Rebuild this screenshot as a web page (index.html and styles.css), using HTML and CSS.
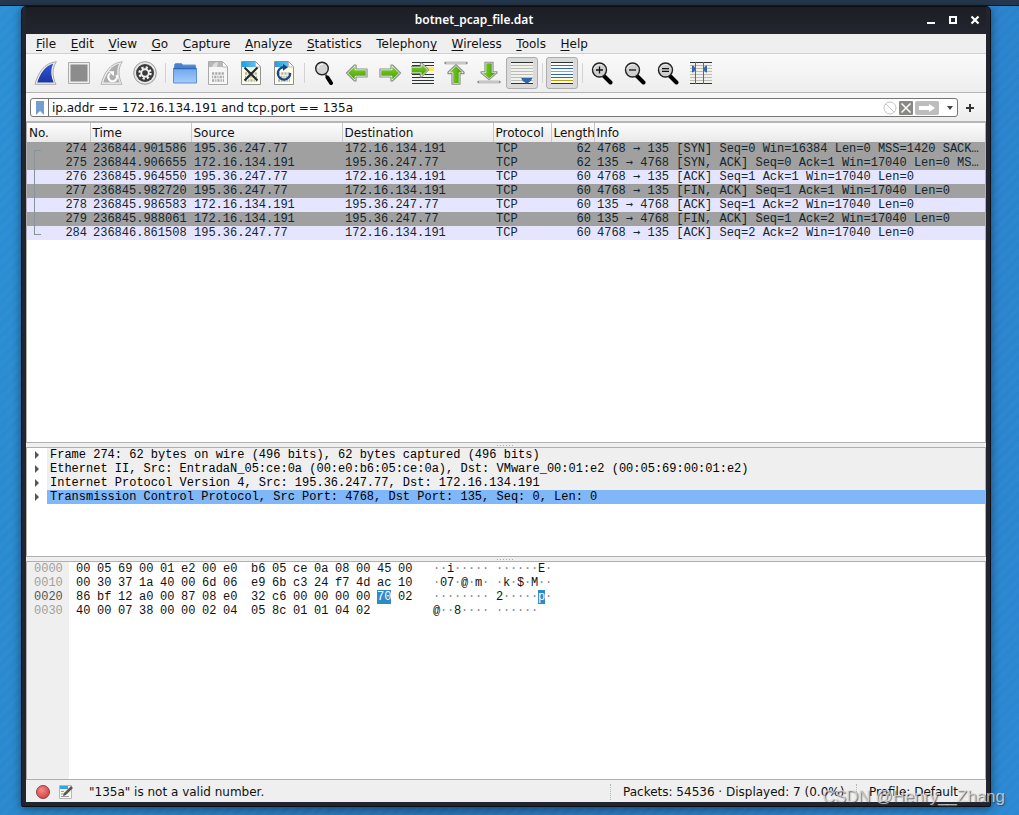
FILE: index.html
```html
<!DOCTYPE html>
<html lang="en">
<head>
<meta charset="utf-8">
<title>botnet_pcap_file.dat</title>
<link rel="stylesheet" href="styles.css">
</head>
<body>
<svg width="0" height="0" class="defs" aria-hidden="true">
  <defs>
    <linearGradient id="gBlue" x1="0" y1="0" x2="0" y2="1"><stop offset="0" stop-color="#3057d8"/><stop offset="1" stop-color="#1c35a0"/></linearGradient>
    <linearGradient id="gGreen" x1="0" y1="0" x2="0" y2="1"><stop offset="0" stop-color="#7fd42c"/><stop offset="1" stop-color="#459a06"/></linearGradient>
    <linearGradient id="gFolder" x1="0" y1="0" x2="0" y2="1"><stop offset="0" stop-color="#6ea6ec"/><stop offset="1" stop-color="#a6ccfb"/></linearGradient>
    <linearGradient id="gSky" x1="0" y1="0" x2="1" y2="0"><stop offset="0" stop-color="#1f9fe0"/><stop offset="1" stop-color="#5cc0ee"/></linearGradient>
    <radialGradient id="gRed" cx=".4" cy=".35" r=".7"><stop offset="0" stop-color="#f58a8a"/><stop offset="1" stop-color="#d63c40"/></radialGradient>
    <g id="arrow"><path d="M1.500 12 L9.500 4 H11 V8 H22 V16 H11 V20 H9.500 Z" fill="#fff" stroke="#8c8e8a" stroke-width="1.200" stroke-linejoin="round"/><path d="M3 12 L9.700 5.500 V9.200 H20.800 V14.800 H9.700 V18.500 Z" fill="url(#gGreen)"/></g>
    <g id="bits" fill="none" stroke-width="2.400"><path d="M6 12.500 h12" stroke-dasharray="2.200 1"/><path d="M6 16 h12" stroke-dasharray="1.200 1 2.200 1"/><path d="M6 19.500 h12" stroke-dasharray="2.200 1 1.200 1"/></g>
    <g id="lens"><path d="M14 15 L20.500 21.500" stroke="#000" stroke-width="4" stroke-linecap="round"/><circle cx="9.500" cy="9" r="7" fill="#cfcfcf" stroke="#222" stroke-width="1.400"/><path d="M4 8 a6 6 0 0 1 8-4" stroke="#eee" fill="none" stroke-width="1"/></g>
  </defs>
</svg>

<div class="panel"></div>
<div class="desktop">
  <main class="window">
    <header class="titlebar">
      <h1 class="title">botnet_pcap_file.dat</h1>
      <div class="window-buttons">
        <button class="win-btn" aria-label="Minimize"><svg width="10" height="10"><path d="M1 8h8" stroke="#fff" stroke-width="2"/></svg></button>
        <button class="win-btn" aria-label="Maximize"><svg width="10" height="10"><path d="M2 2h6v6h-6z" fill="none" stroke="#fff" stroke-width="2"/></svg></button>
        <button class="win-btn" aria-label="Close"><svg width="10" height="10"><path d="M1.500 1.500l7 7M8.500 1.500l-7 7" stroke="#fff" stroke-width="2.200"/></svg></button>
      </div>
    </header>

    <nav class="menubar">
      <div class="menus">
        <button class="menu"><u>F</u>ile</button>
        <button class="menu"><u>E</u>dit</button>
        <button class="menu"><u>V</u>iew</button>
        <button class="menu"><u>G</u>o</button>
        <button class="menu"><u>C</u>apture</button>
        <button class="menu"><u>A</u>nalyze</button>
        <button class="menu"><u>S</u>tatistics</button>
        <button class="menu">Telephon<u>y</u></button>
        <button class="menu"><u>W</u>ireless</button>
        <button class="menu"><u>T</u>ools</button>
        <button class="menu"><u>H</u>elp</button>
      </div>
    </nav>

    <div class="toolbar">
      <button class="tool" aria-label="Start capture"><svg class="icon" viewBox="0 0 24 24"><path d="M1 23.300 C4 12 10 2 22.300 .700 C17.500 8 18.500 16 22 23.300 Z" fill="#eee" stroke="#a9a9a9"/><path d="M3.300 21.500 C6 13 11 5 19.300 2.600 C16.300 9 17 15 19.700 21.500 Z" fill="url(#gBlue)"/></svg></button>
      <button class="tool" aria-label="Stop capture"><svg class="icon" viewBox="0 0 24 24"><path d="M1.500 1.500h21v21h-21z" fill="#eee" stroke="#aaa"/><path d="M3.500 3.500h17v17h-17z" fill="#8c8c8c"/></svg></button>
      <button class="tool" aria-label="Restart capture"><svg class="icon" viewBox="0 0 24 24"><path d="M1 23.300 C4 12 10 2 22.300 .700 C17.500 8 18.500 16 22 23.300 Z" fill="#eee" stroke="#b4b4b4"/><path d="M3.300 21.500 C6 13 11 5 19.300 2.600 C16.300 9 17 15 19.700 21.500 Z" fill="#adadad"/><path d="M10 12.500 A4.300 4.300 0 1 0 16.500 14" fill="none" stroke="#fff" stroke-width="2.200"/><path d="M8.500 10.200h5.500v5z" fill="#fff"/></svg></button>
      <button class="tool" aria-label="Capture options"><svg class="icon" viewBox="0 0 24 24"><circle cx="12" cy="12" r="11.300" fill="#e8e8e8" stroke="#999"/><circle cx="12" cy="12" r="9" fill="#3b3b3b"/><circle cx="12" cy="12" r="5.500" fill="none" stroke="#f1f1f1" stroke-width="2.400" stroke-dasharray="2.200 2.120"/><circle cx="12" cy="12" r="4.700" fill="#f1f1f1"/><circle cx="12" cy="12" r="2.800" fill="#3b3b3b"/></svg></button>
      <span class="sep"></span>
      <button class="tool" aria-label="Open file"><svg class="icon" viewBox="0 0 24 24"><path d="M1.500 6 V3.500 L2.500 2.500 H8.500 L10 4 H22.500 V8 H1.500z" fill="#4c82cc" stroke="#6b9bdc"/><path d="M.5 7 h23 v15 h-23z" fill="url(#gFolder)" stroke="#5b8fd6"/><path d="M1 7.500h22" stroke="#2e68b8" stroke-width="1.500"/></svg></button>
      <button class="tool" aria-label="Save file"><svg class="icon" viewBox="0 0 24 24"><path d="M2.500 .500h14l5 5v18h-19z" fill="#f6f6f6" stroke="#a9a9a9"/><path d="M3 1h13v5H3z" fill="#b7b7b7"/><path d="M6 6 a7 7 0 0 1 6-5l-1 5z" fill="#ddd"/><path d="M16.500 1v5h5" fill="#fff" stroke="#b5b5b5"/><use href="#bits" stroke="#aaa"/></svg></button>
      <button class="tool" aria-label="Close file"><svg class="icon" viewBox="0 0 24 24"><path d="M2.500 .500h14l5 5v18h-19z" fill="#fdfde8" stroke="#8f9290"/><path d="M3 1h13v5H3z" fill="url(#gSky)"/><path d="M16.500 1v5h5" fill="#fff" stroke="#bbb"/><use href="#bits" stroke="#b3b3a6"/><path d="M5.500 6.500l13 13M18.500 6.500l-13 13" stroke="#20282a" stroke-width="2"/></svg></button>
      <button class="tool" aria-label="Reload file"><svg class="icon" viewBox="0 0 24 24"><path d="M2.500 .500h14l5 5v18h-19z" fill="#fdfde8" stroke="#8f9290"/><path d="M3 1h13v5H3z" fill="url(#gSky)"/><path d="M16.500 1v5h5" fill="#fff" stroke="#bbb"/><use href="#bits" stroke="#b3b3a6"/><path d="M12 6.200 A6.200 6.200 0 1 0 18.200 12" fill="none" stroke="#1c4587" stroke-width="2.200"/><path d="M11 3l5 3.200-5 3.500z" fill="#1c4587"/></svg></button>
      <span class="sep"></span>
      <button class="tool" aria-label="Find packet"><svg class="icon" viewBox="0 0 24 24"><path d="M13.500 13.500 L15 16" stroke="#444" stroke-width="2"/><path d="M15.500 16.500 L19 22" stroke="#000" stroke-width="4" stroke-linecap="round"/><circle cx="10" cy="7.500" r="6.300" fill="#d4d4d4" stroke="#222" stroke-width="1.400"/><path d="M6 7 a5 5 0 0 1 5-4" stroke="#fff" fill="none"/></svg></button>
      <button class="tool" aria-label="Previous packet"><svg class="icon" viewBox="0 0 24 24"><use href="#arrow"/></svg></button>
      <button class="tool" aria-label="Next packet"><svg class="icon" viewBox="0 0 24 24"><use href="#arrow" transform="matrix(-1 0 0 1 24 0)"/></svg></button>
      <button class="tool" aria-label="Go to packet"><svg class="icon" viewBox="0 0 24 24"><path d="M1 1.500h22M1 4.500h22M1 13.500h22M1 16.500h22M1 19.500h22M1 22.500h22" stroke="#2e3436" stroke-width="1"/><path d="M15 6h8v4h-8z" fill="#fce94f"/><g transform="matrix(-.88 0 0 .88 19 -1.600)"><use href="#arrow"/></g></svg></button>
      <button class="tool" aria-label="First packet"><svg class="icon" viewBox="0 0 24 24"><path d="M1.500 2h21" stroke="#8c8e8a" stroke-width="2.400" stroke-linecap="round"/><path d="M2 2h20" stroke="#fff" stroke-width="1"/><g transform="matrix(0 .95 1 0 0 2.200)"><use href="#arrow"/></g></svg></button>
      <button class="tool" aria-label="Last packet"><svg class="icon" viewBox="0 0 24 24"><path d="M1.500 21h21" stroke="#8c8e8a" stroke-width="2.400" stroke-linecap="round"/><path d="M2 21h20" stroke="#fff" stroke-width="1"/><g transform="matrix(0 -.85 1 0 0 20)"><use href="#arrow"/></g></svg></button>
      <button class="tool pressed" aria-label="Auto scroll" aria-pressed="true"><svg class="icon" viewBox="0 0 24 24"><path d="M1 2h22v20H1z" fill="#f1f1ee"/><path d="M1 4.500h22M1 7.500h22M1 10.500h22M1 13.500h22M1 16.500h22M1 19.500h22" stroke="#babdb6"/><path d="M1 1.500h22M1 22.500h22" stroke="#2e3436"/><path d="M11 17h11.500c-1 1-1 3.500-3.500 4l-1.200 1.500h-2l-1.200-1.500c-2.500-.5-2.500-3-3.600-4z" fill="#3465a4"/></svg></button>
      <span class="sep"></span>
      <button class="tool pressed" aria-label="Colorize packets" aria-pressed="true"><svg class="icon" viewBox="0 0 24 24"><path d="M1 1h22v22H1z" fill="#fafafa"/><path d="M1 1.500h22M1 22.500h22" stroke="#2e3436"/><path d="M1 4.500h22" stroke="#ef2929"/><path d="M1 7.500h22M1 13.500h22" stroke="#3465a4"/><path d="M1 10.500h22" stroke="#73d216"/><path d="M1 16.500h22" stroke="#75507b"/><path d="M1 19.500h22" stroke="#c4a000"/></svg></button>
      <span class="sep"></span>
      <button class="tool" aria-label="Zoom in"><svg class="icon" viewBox="0 0 24 24"><use href="#lens"/><path d="M6 9h7M9.500 5.500v7" stroke="#111" stroke-width="1.300"/></svg></button>
      <button class="tool" aria-label="Zoom out"><svg class="icon" viewBox="0 0 24 24"><use href="#lens"/><path d="M6 9h7" stroke="#111" stroke-width="1.300"/></svg></button>
      <button class="tool" aria-label="Normal size"><svg class="icon" viewBox="0 0 24 24"><use href="#lens"/><path d="M6 7.700h7M6 10.300h7" stroke="#111" stroke-width="1.300"/></svg></button>
      <button class="tool" aria-label="Resize columns"><svg class="icon" viewBox="0 0 24 24"><path d="M1 2h22v20H1z" fill="#f1f1ee"/><path d="M1 4.500h22M1 7.500h22M1 10.500h22M1 13.500h22M1 16.500h22M1 19.500h22" stroke="#babdb6"/><path d="M1 1.500h22M1 22.500h22" stroke="#2e3436"/><path d="M6.500 1v22M14.500 1v22" stroke="#666"/><path d="M3 4.500c2 .3 2.500 1 3.500 3.500c-1 2.500-1.500 3.200-3.500 3.500zM18 4.500c-2 .3-2.500 1-3.500 3.500c1 2.500 1.500 3.200 3.500 3.500z" fill="#3465a4"/></svg></button>
    </div>

    <form class="filterbar">
      <div class="filterbox">
        <button type="button" class="bookmark" aria-label="Bookmark filter"><svg width="10" height="14"><path d="M1 0h8v14l-4-4-4 4z" fill="#729fcf"/></svg></button>
        <input class="filter-input" type="text" aria-label="Display filter" value="ip.addr == 172.16.134.191 and tcp.port == 135a">
        <svg width="14" height="14" aria-hidden="true"><circle cx="7" cy="7" r="6" fill="none" stroke="#c4c4c4"/><path d="M3 3l8 8" stroke="#c4c4c4"/></svg>
        <button type="button" class="mini" aria-label="Clear filter"><svg width="14" height="14"><rect width="14" height="14" rx="1" fill="#888a85"/><path d="M2.500 2.500l9 9M11.500 2.500l-9 9" stroke="#fff" stroke-width="1.500"/></svg></button>
        <button type="button" class="mini" aria-label="Apply filter"><svg width="24" height="14"><rect width="24" height="14" rx="2" fill="#bdbdbd"/><path d="M4 5h10V3l6 4-6 4V9H4z" fill="#fff"/></svg></button>
        <button type="button" class="mini caret" aria-label="Recent filters"><svg width="8" height="4"><path d="M1 0h6l-3 4z" fill="#444"/></svg></button>
      </div>
      <button type="button" class="mini" aria-label="Add filter button"><svg width="10" height="10"><path d="M1 5h8M5 1v8" stroke="#333" stroke-width="2"/></svg></button>
    </form>

    <section class="packets pane">
      <table class="packet-table">
        <colgroup><col class="c-no"><col class="c-time"><col class="c-addr"><col class="c-addr"><col class="c-proto"><col class="c-len"><col></colgroup>
        <thead><tr><th>No.</th><th>Time</th><th>Source</th><th>Destination</th><th>Protocol</th><th>Length</th><th>Info</th></tr></thead>
        <tbody>
          <tr class="gray"><td class="num">274</td><td>236844.901586</td><td>195.36.247.77</td><td>172.16.134.191</td><td>TCP</td><td class="num">62</td><td>4768 <span class="to">→</span> 135 [SYN] Seq=0 Win=16384 Len=0 MSS=1420 SACK…</td></tr>
          <tr class="gray"><td class="num">275</td><td>236844.906655</td><td>172.16.134.191</td><td>195.36.247.77</td><td>TCP</td><td class="num">62</td><td>135 <span class="to">→</span> 4768 [SYN, ACK] Seq=0 Ack=1 Win=17040 Len=0 MS…</td></tr>
          <tr><td class="num">276</td><td>236845.964550</td><td>195.36.247.77</td><td>172.16.134.191</td><td>TCP</td><td class="num">60</td><td>4768 <span class="to">→</span> 135 [ACK] Seq=1 Ack=1 Win=17040 Len=0</td></tr>
          <tr class="gray"><td class="num">277</td><td>236845.982720</td><td>195.36.247.77</td><td>172.16.134.191</td><td>TCP</td><td class="num">60</td><td>4768 <span class="to">→</span> 135 [FIN, ACK] Seq=1 Ack=1 Win=17040 Len=0</td></tr>
          <tr><td class="num">278</td><td>236845.986583</td><td>172.16.134.191</td><td>195.36.247.77</td><td>TCP</td><td class="num">60</td><td>135 <span class="to">→</span> 4768 [ACK] Seq=1 Ack=2 Win=17040 Len=0</td></tr>
          <tr class="gray"><td class="num">279</td><td>236845.988061</td><td>172.16.134.191</td><td>195.36.247.77</td><td>TCP</td><td class="num">60</td><td>135 <span class="to">→</span> 4768 [FIN, ACK] Seq=1 Ack=2 Win=17040 Len=0</td></tr>
          <tr><td class="num">284</td><td>236846.861508</td><td>195.36.247.77</td><td>172.16.134.191</td><td>TCP</td><td class="num">60</td><td>4768 <span class="to">→</span> 135 [ACK] Seq=2 Ack=2 Win=17040 Len=0</td></tr>
        </tbody>
      </table>
      <span class="conversation"></span>
    </section>
    <div class="splitter"></div>

    <section class="details pane">
      <ul class="tree">
        <li class="node"><button class="expander" aria-label="Expand"></button><span class="label">Frame 274: 62 bytes on wire (496 bits), 62 bytes captured (496 bits)</span></li>
        <li class="node"><button class="expander" aria-label="Expand"></button><span class="label">Ethernet II, Src: EntradaN_05:ce:0a (00:e0:b6:05:ce:0a), Dst: VMware_00:01:e2 (00:05:69:00:01:e2)</span></li>
        <li class="node"><button class="expander" aria-label="Expand"></button><span class="label">Internet Protocol Version 4, Src: 195.36.247.77, Dst: 172.16.134.191</span></li>
        <li class="node selected"><button class="expander" aria-label="Expand"></button><span class="label">Transmission Control Protocol, Src Port: 4768, Dst Port: 135, Seq: 0, Len: 0</span></li>
      </ul>
    </section>
    <div class="splitter"></div>

    <section class="bytes pane">
      <div class="offsets"><div>0000</div><div>0010</div><div class="current">0020</div><div>0030</div></div>
      <div class="dump" id="dump"></div>
    </section>

    <footer class="statusbar">
      <button class="mini" aria-label="Expert information"><svg width="14" height="14"><circle cx="7" cy="7" r="6.500" fill="url(#gRed)" stroke="#8a4444"/></svg></button>
      <button class="mini" aria-label="Capture comment"><svg width="14" height="14"><path d="M.5 .500h12v13h-12z" fill="#f7f7ea" stroke="#b5b8b5"/><path d="M1 1h8v3H1z" fill="#32a5df"/><path d="M2 6.500h3M2 9h3M2 11.500h8" stroke="#999"/><path d="M4.500 10.500l1-2.500 6.500-6.500 1.500 1.500-6.500 6.500z" fill="#555" stroke="#333" stroke-width=".6"/></svg></button>
      <span class="message">"135a" is not a valid number.</span>
      <span class="status-cell packets-cell">Packets: 54536 · Displayed: 7 (0.0%)</span>
      <span class="status-cell profile-cell">Profile: Default</span>
    </footer>
  </main>
</div>
<div class="watermark">CSDN @Henry__Zhang</div>
<script src="dump.js"></script>
</body>
</html>
```
FILE: styles.css
```css
* { box-sizing: border-box; }

body {
  margin: 0;
  height: 100vh;
  display: flex;
  flex-direction: column;
  overflow: hidden;
  font: 12px/16px "DejaVu Sans", sans-serif;
  color: #111;
}

button {
  margin: 0;
  padding: 0;
  border: 0;
  background: none;
  font: inherit;
  color: inherit;
}

svg { display: block; }
.defs { position: absolute; }

.panel {
  flex: none;
  height: 6px;
  background: #24374c;
  border-bottom: 1px solid #121a24;
}

.desktop {
  flex: 1;
  min-height: 0;
  display: flex;
  padding: 0 28px 8px 21px;
  background:
    repeating-linear-gradient(135deg, rgba(255,255,255,0) 0 4px, rgba(255,255,255,.02) 4px 8px),
    linear-gradient(100deg, #2b8fd4, #2674bb 50%, #2b88d2);
}

.window {
  flex: 1;
  min-width: 0;
  display: flex;
  flex-direction: column;
  padding: 0 4px 4px;
  border: 1px solid #0e0f14;
  border-radius: 5px 5px 2px 2px;
  background: #22252f;
  box-shadow: 0 2px 10px rgba(0,0,0,.45);
}

.titlebar {
  flex: none;
  height: 27px;
  display: flex;
  align-items: center;
  padding: 0 6px 0 0;
  background: linear-gradient(#1c1e24, #23262f);
  color: #fff;
}
.title {
  flex: 1;
  margin: 0;
  padding: 0 4px 2px 0;
  text-align: center;
  font: 600 12px/16px "Noto Sans", sans-serif;
}
.window-buttons { display: flex; gap: 12px; padding-bottom: 1px; }

.menubar {
  flex: none;
  height: 20px;
  padding: 2px 10px 0;
  background: #efefef;
  border-bottom: 1px solid #d0d0d0;
}
.menus { display: flex; justify-content: space-between; max-width: 552px; }
.menu u { text-underline-offset: 2px; }

.toolbar {
  flex: none;
  height: 39px;
  display: flex;
  align-items: center;
  gap: 1px;
  padding: 0 4px;
  background: linear-gradient(#fafafa, #ededed);
  border-bottom: 1px solid #b4b4b4;
}
.tool {
  width: 32px;
  height: 32px;
  display: flex;
  align-items: center;
  justify-content: center;
  border-radius: 3px;
}
.pressed { background: #dadada; border: 1px solid #adadad; }
.icon { flex: none; width: 24px; height: 24px; }
.sep {
  width: 6px;
  height: 20px;
  background: linear-gradient(#d2d2d2, #d2d2d2) center / 1px 100% no-repeat;
}

.filterbar {
  flex: none;
  height: 30px;
  display: flex;
  align-items: center;
  gap: 7px;
  padding: 1px 11px 0 4px;
  background: linear-gradient(#f8f8f8, #ededed);
  border-bottom: 2px solid #b6b6b6;
}
.filterbox {
  flex: 1;
  height: 19px;
  display: flex;
  align-items: center;
  gap: 2px;
  padding-right: 3px;
  border: 1px solid #767676;
  border-radius: 3px;
  background: #fff;
}
.bookmark {
  width: 18px;
  height: 17px;
  display: flex;
  align-items: center;
  justify-content: center;
  border-right: 1px solid #767676;
}
.filter-input {
  flex: 1;
  min-width: 0;
  padding: 0 1px;
  border: 0;
  outline: 0;
  background: none;
  font: inherit;
  color: #111;
}
.caret { padding: 0 0 0 5px; }

.pane {
  min-height: 0;
  background: #fff;
  border: 1px solid #b0b0b0;
  border-top: 0;
  font: 12px/14px "Liberation Mono", monospace;
  overflow: hidden;
}
.splitter {
  flex: none;
  height: 5px;
  background: repeating-linear-gradient(90deg, #aaa 0 1px, transparent 1px 3px) center / 18px 1px no-repeat, #efefef;
  border-bottom: 1px solid #b0b0b0;
}

.packets { flex: 321 1 0; position: relative; }
.packet-table {
  width: 100%;
  table-layout: fixed;
  border-collapse: collapse;
  color: #12272e;
}
.c-no { width: 63px; }
.c-time { width: 101px; }
.c-addr { width: 151px; }
.c-proto { width: 58px; }
.c-len { width: 43px; }
.packet-table th {
  height: 19px;
  padding: 1px 0 0 2px;
  border-right: 1px solid #c9c9c9;
  background: linear-gradient(#fdfdfd, #e9e9e9);
  font: 12px/18px "DejaVu Sans", sans-serif;
  color: #111;
  text-align: left;
  white-space: nowrap;
  overflow: hidden;
}
.packet-table th:last-child { border-right: 0; }
.packet-table td {
  height: 14px;
  padding: 0 3px;
  background: #e6e5ff;
  white-space: nowrap;
  overflow: hidden;
}
.packet-table .gray td { background: #a0a0a0; }
.packet-table .num { text-align: right; }
.to { font: 12px/1px "DejaVu Sans Mono", monospace; }

.conversation {
  position: absolute;
  left: 7px;
  top: 27px;
  width: 7px;
  height: 85px;
  border: 1px solid #86939a;
  border-right: 0;
}

.details { flex: 109 1 0; }
.tree { list-style: none; margin: 0; padding: 0; color: #000; }
.node { display: flex; white-space: pre; }
.expander { width: 20px; display: flex; align-items: center; padding-left: 8px; }
.expander::before {
  content: "";
  border: 4px solid transparent;
  border-left: 4px solid #555;
  border-right: 0;
}
.label { flex: 1; min-width: 0; height: 14px; padding-left: 3px; background: #efefef; overflow: hidden; }
.selected .label { background: #80b7f8; }

.bytes { flex: 218 1 0; display: flex; color: #111; }
.offsets { width: 42px; padding: 0 7px; background: #efefef; color: #a0a0a0; }
.current { color: #555; }
.dump { flex: 1; padding-left: 7px; }
.line { display: flex; height: 14px; }
.hex { width: 357px; display: grid; grid-template-columns: repeat(8, 21px) 7px repeat(8, 21px); }
.hex span, .ascii span { white-space: pre; }
.hex .hit { width: 14px; }
.ascii { display: grid; grid-template-columns: repeat(8, 7px) 7px repeat(8, 7px); }
.ascii .dot { color: #888; }
.hit { background: #2e8bc9; color: #fff; }

.statusbar {
  flex: none;
  height: 22px;
  display: flex;
  align-items: center;
  gap: 9px;
  padding: 1px 0 0 10px;
  background: #efefef;
}
.message { flex: 1; padding-left: 7px; }
.status-cell { padding-left: 12px; border-left: 1px dotted #b5b5b5; }
.packets-cell { width: 237px; }
.profile-cell { width: 130px; }

.watermark {
  position: absolute;
  right: 14px;
  bottom: 7px;
  font: 17px/22px "Liberation Sans", sans-serif;
  color: rgba(225,225,225,.75);
  text-shadow: 1px 1px 1px rgba(60,60,60,.75);
}
```
FILE: dump.js
```js
const data = [
  "00 05 69 00 01 e2 00 e0 b6 05 ce 0a 08 00 45 00",
  "00 30 37 1a 40 00 6d 06 e9 6b c3 24 f7 4d ac 10",
  "86 bf 12 a0 00 87 08 e0 32 c6 00 00 00 00 70 02",
  "40 00 07 38 00 00 02 04 05 8c 01 01 04 02"
];
const selected = 46;

const dump = document.getElementById("dump");

function cell(text, className) {
  const span = document.createElement("span");
  span.textContent = text;
  if (className) span.className = className;
  return span;
}

data.forEach((row, r) => {
  const line = document.createElement("div");
  const hex = document.createElement("div");
  const ascii = document.createElement("div");
  line.className = "line";
  hex.className = "hex";
  ascii.className = "ascii";
  row.split(" ").forEach((byte, i) => {
    if (i === 8) {
      hex.append(cell(" "));
      ascii.append(cell(" "));
    }
    const code = parseInt(byte, 16);
    const printable = code > 32 && code < 127;
    const hit = r * 16 + i === selected ? "hit" : "";
    hex.append(cell(byte, hit));
    ascii.append(cell(printable ? String.fromCharCode(code) : "·", hit || (printable ? "" : "dot")));
  });
  line.append(hex, ascii);
  dump.append(line);
});
```
